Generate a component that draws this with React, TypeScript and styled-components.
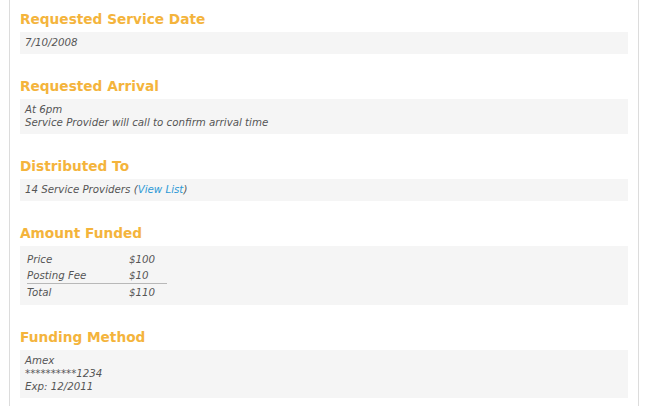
import * as React from "react"
import styled, { createGlobalStyle } from "styled-components"

const GlobalStyle = createGlobalStyle`
  html, body {
    margin: 0;
    padding: 0;
    background: #fff;
  }
  body {
    font-family: "DejaVu Sans", Verdana, sans-serif;
  }
`

const Page = styled.div`
  margin-left: 9px;
  width: 608px;
  min-height: 406px;
  padding: 9px 10px 0;
  border-left: 1px solid #dcdcdc;
  border-right: 1px solid #dcdcdc;
`

const Section = styled.section`
  margin-bottom: 22px;
`

const Heading = styled.h2`
  margin: 0;
  padding: 0;
  height: 23px;
  font-size: 13.7px;
  line-height: 20px;
  font-weight: bold;
  color: #f4b43c;
`

const Box = styled.div`
  background: #f5f5f5;
  padding: 4px 5px 5px;
  font-size: 10.25px;
  line-height: 13px;
  font-style: italic;
  color: #555;
`

const Line = styled.div``

const ViewLink = styled.a`
  color: #2d9ad6;
  text-decoration: none;
`

const Table = styled.table`
  border-collapse: collapse;
  width: 140px;
  margin: 1px 0 0 2px;
  font-size: 10.25px;

  & td {
    padding: 0;
    height: 16px;
    vertical-align: middle;
  }

  & td:first-child {
    width: 102px;
  }

  & tr.total td {
    border-top: 1px solid #b8b8b8;
  }
`

const sections = [
  { title: "Requested Service Date", lines: ["7/10/2008"] },
  {
    title: "Requested Arrival",
    lines: ["At 6pm", "Service Provider will call to confirm arrival time"],
  },
]

export default function App() {
  return (
    <>
      <GlobalStyle />
      <Page>
        {sections.map(s => (
          <Section key={s.title}>
            <Heading>{s.title}</Heading>
            <Box>
              {s.lines.map(l => (
                <Line key={l}>{l}</Line>
              ))}
            </Box>
          </Section>
        ))}
        <Section>
          <Heading>Distributed To</Heading>
          <Box>
            14 Service Providers (<ViewLink href="#">View List</ViewLink>)
          </Box>
        </Section>
        <Section>
          <Heading>Amount Funded</Heading>
          <Box>
            <Table>
              <tbody>
                <tr>
                  <td>Price</td>
                  <td>$100</td>
                </tr>
                <tr>
                  <td>Posting Fee</td>
                  <td>$10</td>
                </tr>
                <tr className="total">
                  <td>Total</td>
                  <td>$110</td>
                </tr>
              </tbody>
            </Table>
          </Box>
        </Section>
        <Section>
          <Heading>Funding Method</Heading>
          <Box>
            <Line>Amex</Line>
            <Line>**********1234</Line>
            <Line>Exp: 12/2011</Line>
          </Box>
        </Section>
      </Page>
    </>
  )
}
